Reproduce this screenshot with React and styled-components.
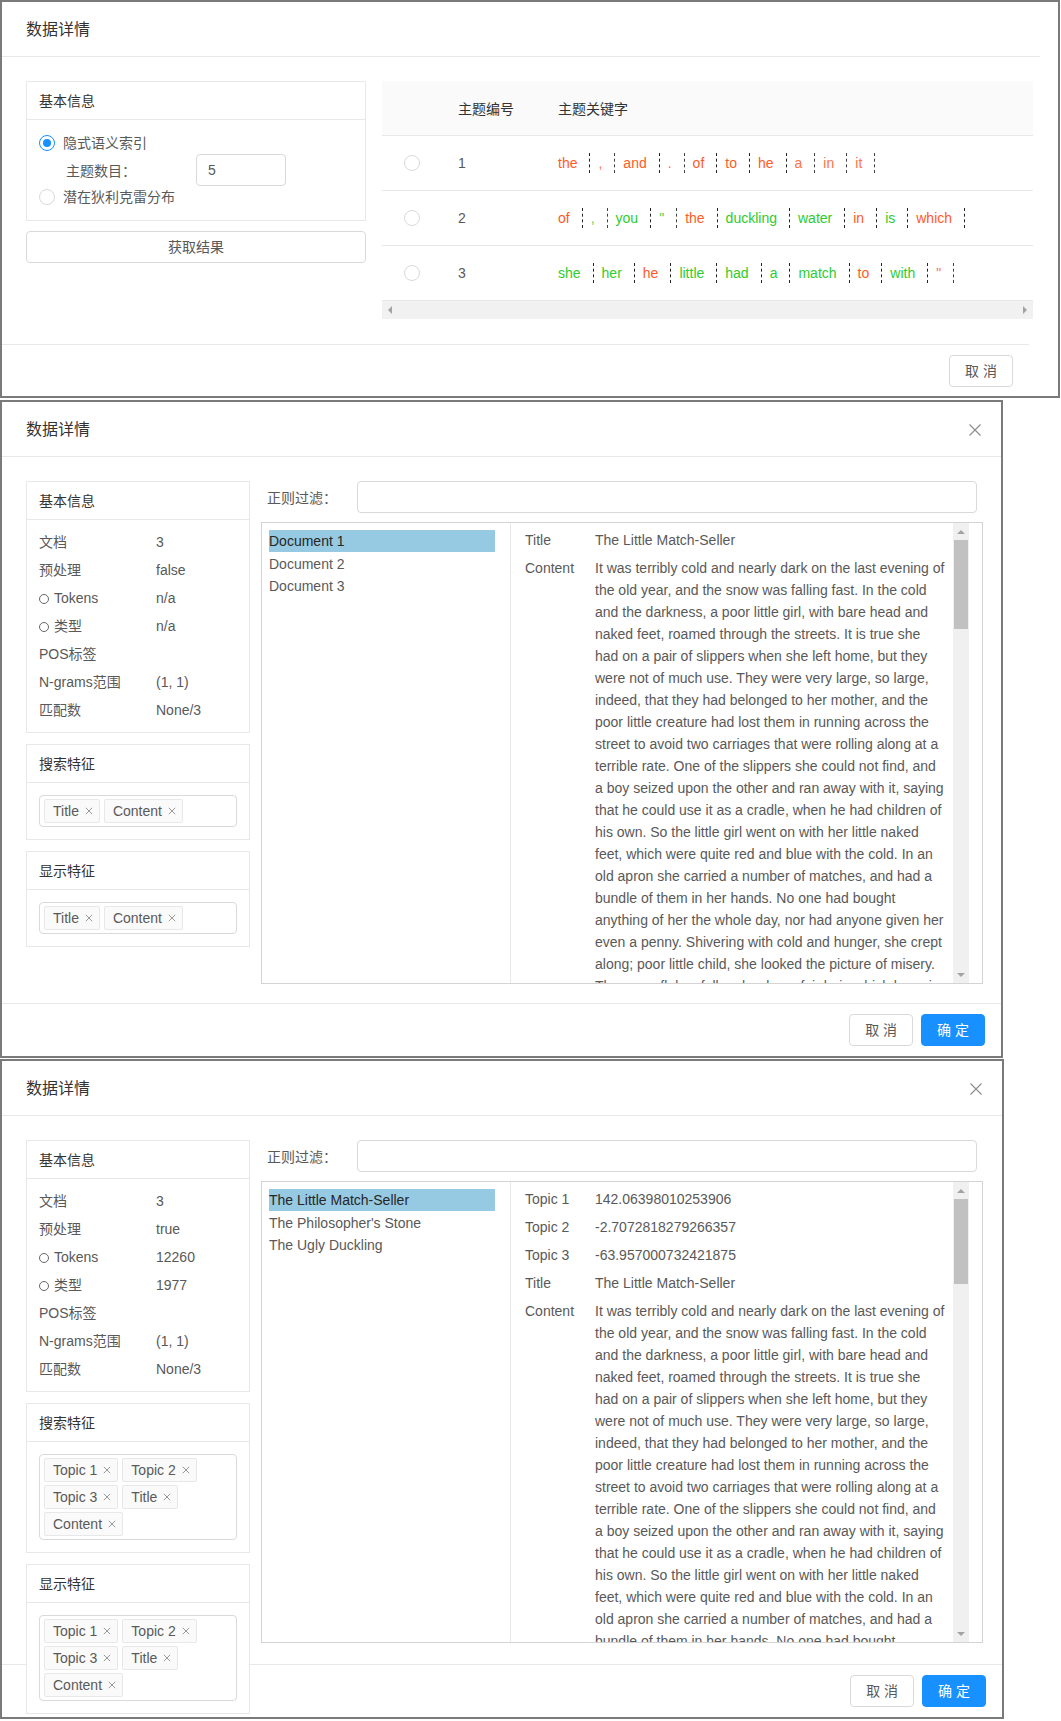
import React from 'react';
import styled, { createGlobalStyle } from 'styled-components';

const GlobalStyle = createGlobalStyle`
  html, body { margin: 0; padding: 0; background: #fff; }
  body {
    font-family: "Liberation Sans", "Noto Sans CJK SC", Arial, sans-serif;
    font-size: 14px;
    color: #595959;
  }
  * { box-sizing: border-box; }
`;

const Page = styled.div`
  width: 1061px;
  height: 1721px;
  overflow: hidden;
  display: flex;
  flex-direction: column;
  align-items: flex-start;
`;

const Panel = styled.section`
  flex-shrink: 0;
  width: ${(p) => p.$w}px;
  height: ${(p) => p.$h}px;
  margin-top: ${(p) => p.$mt || 0}px;
  border: 2px solid #7a7a7a;
  background: #fff;
  overflow: hidden;
  display: flex;
  flex-direction: column;
`;

const Header = styled.header`
  flex-shrink: 0;
  height: 55px;
  width: ${(p) => (p.$w ? `${p.$w}px` : '100%')};
  padding: 17px 24px 15px;
  border-bottom: 1px solid #e8e8e8;
  display: flex;
  align-items: center;
  justify-content: space-between;
`;

const Title = styled.div`
  font-size: 16px;
  line-height: 22px;
  color: #333;
`;

const CloseBtn = styled.span`
  width: 16px;
  height: 16px;
  margin-right: -6px;
  display: inline-flex;
  align-items: center;
  justify-content: center;
`;

const Body = styled.div`
  flex-shrink: 0;
  height: ${(p) => p.$h}px;
  padding: 24px;
  display: flex;
  align-items: flex-start;
  gap: ${(p) => p.$gap}px;
`;

const Footer = styled.footer`
  flex-shrink: 0;
  height: 53px;
  width: ${(p) => (p.$w ? `${p.$w}px` : '100%')};
  border-top: 1px solid #e8e8e8;
  padding: 10px 16px;
  display: flex;
  justify-content: flex-end;
  gap: 8px;
`;

const Button = styled.button`
  height: 32px;
  width: ${(p) => (p.$block ? '100%' : 'auto')};
  padding: 0 15px;
  border-radius: 4px;
  border: 1px solid ${(p) => (p.$primary ? '#1890ff' : '#d9d9d9')};
  background: ${(p) => (p.$primary ? '#1890ff' : '#fff')};
  color: ${(p) => (p.$primary ? '#fff' : '#595959')};
  font-family: inherit;
  font-size: 14px;
  line-height: 30px;
  margin-top: ${(p) => p.$mt || 0}px;
  cursor: pointer;
`;

/* ---------- left column / cards ---------- */

const LeftCol = styled.div`
  flex-shrink: 0;
  width: ${(p) => p.$w}px;
  position: relative;
  z-index: 1;
  display: flex;
  flex-direction: column;
  gap: ${(p) => (p.$gap === undefined ? 11 : p.$gap)}px;
`;

const Card = styled.div`
  border: 1px solid #e8e8e8;
  background: #fff;
`;

const CardHead = styled.div`
  height: 38px;
  padding: 0 12px;
  line-height: 38px;
  border-bottom: 1px solid #e8e8e8;
  color: #333;
`;

const CardBody = styled.div`
  padding: ${(p) => p.$pad || '12px'};
`;

const InfoRow = styled.div`
  display: grid;
  grid-template-columns: 117px 1fr;
  height: 28px;
  line-height: 28px;
  white-space: nowrap;
`;

const Dot = styled.span`
  display: inline-block;
  width: 10px;
  height: 10px;
  border: 1px solid #666;
  border-radius: 50%;
  margin-right: 5px;
  vertical-align: -1px;
`;

const TagSelect = styled.div`
  border: 1px solid #d9d9d9;
  border-radius: 4px;
  background: #fff;
  padding: 0 4px 3px 4px;
  display: flex;
  flex-wrap: wrap;
`;

const Tag = styled.span`
  height: 24px;
  margin: 3px 4px 0 0;
  padding: 0 6px 0 8px;
  background: #fafafa;
  border: 1px solid #e8e8e8;
  border-radius: 2px;
  display: inline-flex;
  align-items: center;
  line-height: 22px;
  color: #595959;
  white-space: nowrap;
`;

const TagX = styled.svg`
  margin-left: 6px;
  flex-shrink: 0;
`;

/* ---------- panel 1 ---------- */

const RadioRow = styled.label`
  height: 22px;
  display: flex;
  align-items: center;
  gap: 8px;
  line-height: 22px;
`;

const RadioCircle = styled.span`
  width: 16px;
  height: 16px;
  flex-shrink: 0;
  border-radius: 50%;
  border: 1px solid ${(p) => (p.$checked ? '#1890ff' : '#d9d9d9')};
  background: #fff;
  display: inline-flex;
  align-items: center;
  justify-content: center;
  &::after {
    content: '';
    width: 8px;
    height: 8px;
    border-radius: 50%;
    background: #1890ff;
    display: ${(p) => (p.$checked ? 'block' : 'none')};
  }
`;

const FieldRow = styled.div`
  height: 32px;
  margin-left: 27px;
  display: flex;
  align-items: center;
`;

const FieldLabel = styled.span`
  width: ${(p) => p.$w}px;
  flex-shrink: 0;
  color: #595959;
`;

const Input = styled.div`
  height: 32px;
  width: ${(p) => (p.$w ? `${p.$w}px` : 'auto')};
  flex: ${(p) => (p.$w ? 'none' : '1')};
  border: 1px solid #d9d9d9;
  border-radius: 4px;
  padding: 0 11px;
  line-height: 30px;
  color: #595959;
  background: #fff;
`;

const Table = styled.div`
  flex-shrink: 0;
  width: 651px;
  display: flex;
  flex-direction: column;
`;

const TRow = styled.div`
  display: grid;
  grid-template-columns: 60px 100px 1fr;
  height: 55px;
  align-items: center;
  border-bottom: 1px solid #e8e8e8;
  background: ${(p) => (p.$head ? '#fafafa' : '#fff')};
  color: ${(p) => (p.$head ? '#333' : '#595959')};
`;

const Cell = styled.div`
  padding: 0 16px;
  display: flex;
  align-items: center;
  justify-content: ${(p) => (p.$center ? 'center' : 'flex-start')};
  white-space: nowrap;
`;

const Word = styled.span`
  display: inline-block;
  height: 20px;
  line-height: 20px;
  padding-right: 12px;
  margin-right: 8px;
  border-right: 1px dashed #222;
  color: ${(p) => (p.$c === 'g' ? '#2ecc2e' : '#ff5a26')};
  opacity: ${(p) => (p.$light ? 0.85 : 1)};
`;

const HScroll = styled.div`
  height: 18px;
  background: #f1f1f1;
  display: flex;
  align-items: center;
  justify-content: space-between;
  padding: 0 6px;
`;

const ArrowH = styled.span`
  width: 0;
  height: 0;
  border-top: 4px solid transparent;
  border-bottom: 4px solid transparent;
  ${(p) => (p.$dir === 'left' ? 'border-right: 4px solid #a3a3a3;' : 'border-left: 4px solid #a3a3a3;')}
`;

/* ---------- panels 2 & 3 right side ---------- */

const RightCol = styled.div`
  flex-shrink: 0;
  width: 722px;
  display: flex;
  flex-direction: column;
`;

const FilterRow = styled.div`
  height: 32px;
  margin-bottom: 9px;
  padding: 0 6px;
  display: flex;
  align-items: center;
`;

const ListBox = styled.div`
  height: 462px;
  border: 1px solid #d4d4d4;
  padding-right: 13px;
  display: flex;
`;

const DocList = styled.div`
  width: 249px;
  flex-shrink: 0;
  border-right: 1px solid #e8e8e8;
  padding: 7px 15px 7px 7px;
`;

const DocItem = styled.div`
  height: 22px;
  line-height: 22px;
  margin-bottom: 0.5px;
  white-space: nowrap;
  background: ${(p) => (p.$active ? '#96c9e2' : 'transparent')};
  color: ${(p) => (p.$active ? '#262626' : '#595959')};
`;

const Fields = styled.div`
  flex: 1;
  min-width: 0;
  overflow: hidden;
  padding: 6px 0 0 14px;
  display: grid;
  grid-template-columns: 70px 1fr;
  row-gap: 6px;
  align-content: start;
  line-height: 22px;
`;

const FieldName = styled.div`
  white-space: nowrap;
`;

const FieldValue = styled.div`
  white-space: nowrap;
`;

const Line = styled.span`
  display: block;
`;

const VScroll = styled.div`
  width: 16px;
  flex-shrink: 0;
  background: #f0f0f0;
  display: flex;
  flex-direction: column;
`;

const ArrowBox = styled.div`
  height: 17px;
  flex-shrink: 0;
  display: flex;
  align-items: center;
  justify-content: center;
  margin-top: ${(p) => (p.$bottom ? 'auto' : '0')};
`;

const ArrowV = styled.span`
  width: 0;
  height: 0;
  border-left: 4px solid transparent;
  border-right: 4px solid transparent;
  ${(p) => (p.$dir === 'up' ? 'border-bottom: 4px solid #a3a3a3;' : 'border-top: 4px solid #a3a3a3;')}
`;

const Thumb = styled.div`
  height: ${(p) => p.$h}px;
  margin: 0 1px;
  background: #c1c1c1;
`;

/* ---------- data ---------- */

const story = [
  'It was terribly cold and nearly dark on the last evening of',
  'the old year, and the snow was falling fast. In the cold',
  'and the darkness, a poor little girl, with bare head and',
  'naked feet, roamed through the streets. It is true she',
  'had on a pair of slippers when she left home, but they',
  'were not of much use. They were very large, so large,',
  'indeed, that they had belonged to her mother, and the',
  'poor little creature had lost them in running across the',
  'street to avoid two carriages that were rolling along at a',
  'terrible rate. One of the slippers she could not find, and',
  'a boy seized upon the other and ran away with it, saying',
  'that he could use it as a cradle, when he had children of',
  'his own. So the little girl went on with her little naked',
  'feet, which were quite red and blue with the cold. In an',
  'old apron she carried a number of matches, and had a',
  'bundle of them in her hands. No one had bought',
  'anything of her the whole day, nor had anyone given her',
  'even a penny. Shivering with cold and hunger, she crept',
  'along; poor little child, she looked the picture of misery.',
  'The snow-flakes fell on her long, fair hair, which hung in',
  'curls on her shoulders, but she regarded them not.',
];

const topics = [
  [
    ['the', 'o'], [',', 'o', 1], ['and', 'o'], ['.', 'o', 1], ['of', 'o'],
    ['to', 'o'], ['he', 'o'], ['a', 'o', 1], ['in', 'o', 1], ['it', 'o', 1],
  ],
  [
    ['of', 'o'], [',', 'g', 1], ['you', 'g'], ['"', 'g', 1], ['the', 'o'],
    ['duckling', 'g'], ['water', 'g'], ['in', 'o'], ['is', 'g'], ['which', 'o'],
  ],
  [
    ['she', 'g'], ['her', 'g'], ['he', 'o'], ['little', 'g'], ['had', 'g'],
    ['a', 'g'], ['match', 'g'], ['to', 'o'], ['with', 'g'], ['"', 'o', 1],
  ],
];

/* ---------- pieces ---------- */

const CloseIcon = () => (
  <CloseBtn>
    <svg width="12" height="12" viewBox="0 0 12 12">
      <path d="M0.5 0.5L11.5 11.5M11.5 0.5L0.5 11.5" stroke="#8c8c8c" strokeWidth="1.1" fill="none" />
    </svg>
  </CloseBtn>
);

const TagItem = ({ children }) => (
  <Tag>
    {children}
    <TagX width="8" height="8" viewBox="0 0 8 8">
      <path d="M0.8 0.8L7.2 7.2M7.2 0.8L0.8 7.2" stroke="#999" strokeWidth="1" fill="none" />
    </TagX>
  </Tag>
);

const InfoCard = ({ rows }) => (
  <Card>
    <CardHead>基本信息</CardHead>
    <CardBody $pad="8px 12px">
      {rows.map(([label, value, dot]) => (
        <InfoRow key={label}>
          <span>
            {dot && <Dot />}
            {label}
          </span>
          <span>{value}</span>
        </InfoRow>
      ))}
    </CardBody>
  </Card>
);

const FeatureCard = ({ title, tags }) => (
  <Card>
    <CardHead>{title}</CardHead>
    <CardBody>
      <TagSelect>
        {tags.map((t) => (
          <TagItem key={t}>{t}</TagItem>
        ))}
      </TagSelect>
    </CardBody>
  </Card>
);

const DetailBox = ({ docs, fields, lines, thumb }) => (
  <ListBox>
    <DocList>
      {docs.map((d, i) => (
        <DocItem key={d} $active={i === 0}>
          {d}
        </DocItem>
      ))}
    </DocList>
    <Fields>
      {fields.map(([k, v]) => (
        <React.Fragment key={k}>
          <FieldName>{k}</FieldName>
          <FieldValue>{v}</FieldValue>
        </React.Fragment>
      ))}
      <FieldName>Content</FieldName>
      <FieldValue>
        {lines.map((l, i) => (
          <Line key={i}>{l}</Line>
        ))}
      </FieldValue>
    </Fields>
    <VScroll>
      <ArrowBox>
        <ArrowV $dir="up" />
      </ArrowBox>
      <Thumb $h={thumb} />
      <ArrowBox $bottom>
        <ArrowV $dir="down" />
      </ArrowBox>
    </VScroll>
  </ListBox>
);

const DetailDialog = ({ w, h, mt, bodyH, info, tags, docs, fields, lines, thumb }) => (
  <Panel $w={w} $h={h} $mt={mt}>
    <Header>
      <Title>数据详情</Title>
      <CloseIcon />
    </Header>
    <Body $h={bodyH} $gap={11}>
      <LeftCol $w={224}>
        <InfoCard rows={info} />
        <FeatureCard title="搜索特征" tags={tags} />
        <FeatureCard title="显示特征" tags={tags} />
      </LeftCol>
      <RightCol>
        <FilterRow>
          <FieldLabel $w={90}>正则过滤：</FieldLabel>
          <Input />
        </FilterRow>
        <DetailBox docs={docs} fields={fields} lines={lines} thumb={thumb} />
      </RightCol>
    </Body>
    <Footer>
      <Button>取 消</Button>
      <Button $primary>确 定</Button>
    </Footer>
  </Panel>
);

export default function App() {
  return (
    <>
      <GlobalStyle />
      <Page>
        <Panel $w={1060} $h={398}>
          <Header $w={1038}>
            <Title>数据详情</Title>
          </Header>
          <Body $h={287} $gap={16}>
            <LeftCol $w={340} $gap={0}>
              <Card>
                <CardHead>基本信息</CardHead>
                <CardBody>
                  <RadioRow>
                    <RadioCircle $checked />
                    <span>隐式语义索引</span>
                  </RadioRow>
                  <FieldRow>
                    <FieldLabel $w={130}>主题数目：</FieldLabel>
                    <Input $w={90}>5</Input>
                  </FieldRow>
                  <RadioRow>
                    <RadioCircle />
                    <span>潜在狄利克雷分布</span>
                  </RadioRow>
                </CardBody>
              </Card>
              <Button $block $mt={10}>获取结果</Button>
            </LeftCol>
            <Table>
              <TRow $head>
                <Cell />
                <Cell>主题编号</Cell>
                <Cell>主题关键字</Cell>
              </TRow>
              {topics.map((words, i) => (
                <TRow key={i}>
                  <Cell $center>
                    <RadioCircle />
                  </Cell>
                  <Cell>{i + 1}</Cell>
                  <Cell>
                    {words.map(([w, c, light], j) => (
                      <Word key={j} $c={c} $light={!!light}>
                        {w}
                      </Word>
                    ))}
                  </Cell>
                </TRow>
              ))}
              <HScroll>
                <ArrowH $dir="left" />
                <ArrowH $dir="right" />
              </HScroll>
            </Table>
          </Body>
          <Footer $w={1027}>
            <Button>取 消</Button>
          </Footer>
        </Panel>

        <DetailDialog
          w={1003}
          h={658}
          mt={2}
          bodyH={546}
          info={[
            ['文档', '3'],
            ['预处理', 'false'],
            ['Tokens', 'n/a', true],
            ['类型', 'n/a', true],
            ['POS标签', ''],
            ['N-grams范围', '(1, 1)'],
            ['匹配数', 'None/3'],
          ]}
          tags={['Title', 'Content']}
          docs={['Document 1', 'Document 2', 'Document 3']}
          fields={[['Title', 'The Little Match-Seller']]}
          lines={story.slice(0, 21)}
          thumb={89}
        />

        <DetailDialog
          w={1004}
          h={660}
          mt={1}
          bodyH={548}
          info={[
            ['文档', '3'],
            ['预处理', 'true'],
            ['Tokens', '12260', true],
            ['类型', '1977', true],
            ['POS标签', ''],
            ['N-grams范围', '(1, 1)'],
            ['匹配数', 'None/3'],
          ]}
          tags={['Topic 1', 'Topic 2', 'Topic 3', 'Title', 'Content']}
          docs={['The Little Match-Seller', "The Philosopher's Stone", 'The Ugly Duckling']}
          fields={[
            ['Topic 1', '142.06398010253906'],
            ['Topic 2', '-2.7072818279266357'],
            ['Topic 3', '-63.957000732421875'],
            ['Title', 'The Little Match-Seller'],
          ]}
          lines={story.slice(0, 17)}
          thumb={85}
        />
      </Page>
    </>
  );
}
